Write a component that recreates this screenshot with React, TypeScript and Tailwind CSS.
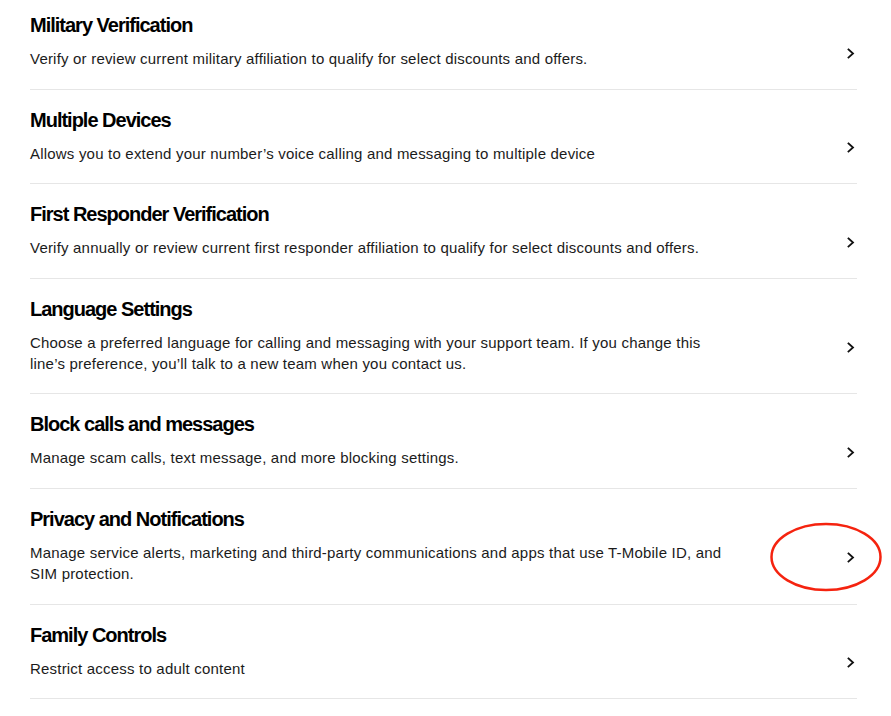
import { ReactNode } from "react";

type Item = { title: string; desc: ReactNode; highlight?: boolean };

const items: Item[] = [
  {
    title: "Military Verification",
    desc: "Verify or review current military affiliation to qualify for select discounts and offers.",
  },
  {
    title: "Multiple Devices",
    desc: "Allows you to extend your number’s voice calling and messaging to multiple device",
  },
  {
    title: "First Responder Verification",
    desc: "Verify annually or review current first responder affiliation to qualify for select discounts and offers.",
  },
  {
    title: "Language Settings",
    desc: "Choose a preferred language for calling and messaging with your support team. If you change this line’s preference, you’ll talk to a new team when you contact us.",
  },
  {
    title: "Block calls and messages",
    desc: "Manage scam calls, text message, and more blocking settings.",
  },
  {
    title: "Privacy and Notifications",
    desc: "Manage service alerts, marketing and third-party communications and apps that use T-Mobile ID, and SIM protection.",
    highlight: true,
  },
  {
    title: "Family Controls",
    desc: "Restrict access to adult content",
  },
];

function Chevron() {
  return (
    <svg width="8" height="11" viewBox="0 0 8 11" fill="none" stroke="#111" strokeWidth="1.8" strokeLinecap="square">
      <path d="M1.5 1.5 L6 5.5 L1.5 9.5" />
    </svg>
  );
}

export default function App() {
  return (
    <div className="min-h-screen bg-white font-['Liberation_Sans',Arial,sans-serif] text-[#1b1b1b]">
      <div className="-mt-[5px] pl-[30px] pr-[34px]">
        {items.map((item) => (
          <a
            key={item.title}
            href="#"
            className="relative flex items-center justify-between border-b border-[#e6e6e6] pt-[18px] pb-[19.6px]"
          >
            <div className="max-w-[705px]">
              <h2 className="text-[20px] font-bold leading-[24px] tracking-[-0.05em] text-black">
                {item.title}
              </h2>
              <p className="mt-[11px] text-[15px] leading-[21px] tracking-[0.2px]">{item.desc}</p>
            </div>
            <div className="mt-[24px] mr-[2px] flex shrink-0">
              <Chevron />
            </div>
            {item.highlight && (
              <svg
                className="pointer-events-none absolute right-[-26px] top-[33px]"
                width="114"
                height="72"
                viewBox="0 0 114 72"
                fill="none"
              >
                <ellipse cx="57" cy="35" rx="54.5" ry="33" stroke="#f5230f" strokeWidth="2.5" />
              </svg>
            )}
          </a>
        ))}
      </div>
    </div>
  );
}
